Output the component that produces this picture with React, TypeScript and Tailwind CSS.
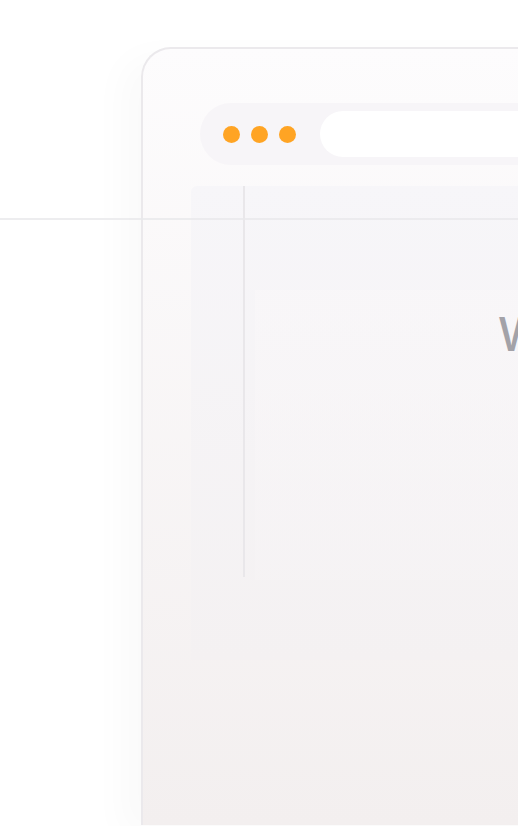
import React from "react";

export default function App() {
  return (
    <div
      className="relative w-[518px] h-[826px] overflow-hidden bg-white"
      style={{ fontFamily: "Inter, 'Noto Sans', sans-serif" }}
    >
      <div className="pt-[47px] pl-[141px]">
        <div className="w-[640px] h-[778px] rounded-tl-[30px] border-l-2 border-t-2 border-[#ebe9ec] bg-gradient-to-b from-[#fdfcfd] to-[#f3efef] shadow-[-20px_10px_36px_rgba(40,30,50,0.025)] flex flex-col">
          <div className="pt-[54px] pl-[57px]">
            <div className="h-[62px] rounded-l-full bg-[#f7f5f8] flex items-center pl-[23px] gap-[11px]">
              <span className="w-[17px] h-[17px] rounded-full bg-[#ffa424]" />
              <span className="w-[17px] h-[17px] rounded-full bg-[#ffa424]" />
              <span className="w-[17px] h-[17px] rounded-full bg-[#ffa424]" />
              <div className="ml-[13px] flex-1 h-[46px] rounded-l-full bg-white" />
            </div>
          </div>
          <div className="pl-[48px] pt-[21px]">
            <div className="h-[474px] rounded-tl-[6px] bg-gradient-to-b from-[#f7f6f9] to-[#f4f1f2] flex">
              <div className="w-[54px] shrink-0 border-r-2 border-[#e9e7ea] h-[391px]" />
              <div className="flex-1 flex flex-col">
                <div className="mt-[104px] ml-[10px] h-[290px] bg-gradient-to-b from-[#f9f7f9]/70 to-[#f7f4f5]/40 pl-[243px] pt-[21px]">
                  <div className="text-[46px] leading-none font-medium text-[#a3a2a8] whitespace-nowrap">
                    Website
                  </div>
                </div>
              </div>
            </div>
          </div>
        </div>
      </div>
      <div className="absolute left-0 right-0 top-[218px] h-[2px] bg-[#e9e8eb]/80" />
    </div>
  );
}
